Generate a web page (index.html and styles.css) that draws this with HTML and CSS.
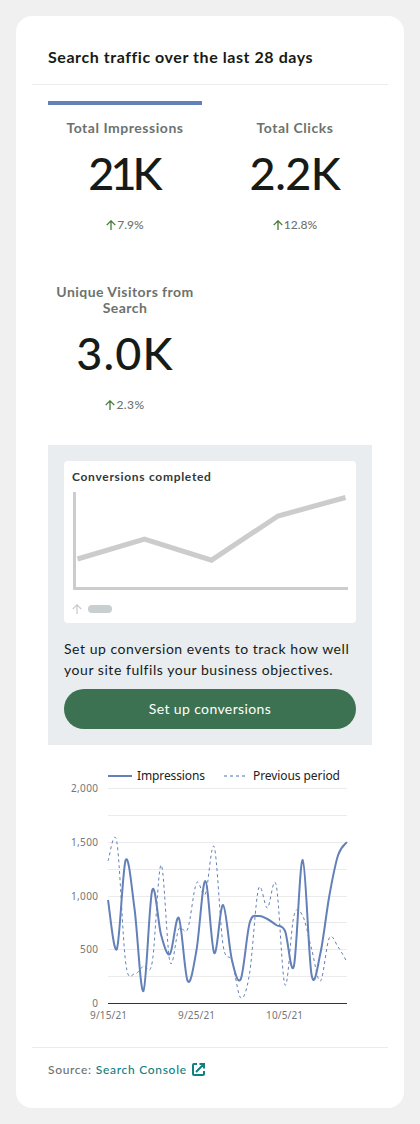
FILE: index.html
```html
<!DOCTYPE html>
<html lang="en">
<head>
<meta charset="utf-8">
<title>Search traffic</title>
<link rel="stylesheet" href="styles.css">
</head>
<body>
<main class="card">
  <header class="card-header"><h1 class="title">Search traffic over the last 28 days</h1></header>
  <section class="metrics">
    <div class="metric metric-active">
      <h2 class="metric-label">Total Impressions</h2>
      <div class="metric-value value-impressions">21K</div>
      <div class="metric-change"><svg class="arrow" viewBox="0 0 10 10"><path d="M5 10V1M.7 5.1 5 .8l4.3 4.3"/></svg><span>7.9%</span></div>
    </div>
    <div class="metric">
      <h2 class="metric-label">Total Clicks</h2>
      <div class="metric-value">2.2K</div>
      <div class="metric-change"><svg class="arrow" viewBox="0 0 10 10"><path d="M5 10V1M.7 5.1 5 .8l4.3 4.3"/></svg><span>12.8%</span></div>
    </div>
    <div class="metric">
      <h2 class="metric-label label-visitors">Unique Visitors from<br>Search</h2>
      <div class="metric-value value-visitors">3.0K</div>
      <div class="metric-change change-visitors"><svg class="arrow" viewBox="0 0 10 10"><path d="M5 10V1M.7 5.1 5 .8l4.3 4.3"/></svg><span>2.3%</span></div>
    </div>
  </section>
  <section class="promo">
    <div class="preview">
      <h3 class="preview-title">Conversions completed</h3>
      <svg class="preview-graph" viewBox="0 0 276 98">
        <path d="M2.5 0V96.5H276" stroke-width="3"/>
        <path d="M5.5 67 72.5 47.2 139.5 68.2 206 24 273.5 5.5" stroke-width="5"/>
      </svg>
      <div class="preview-change"><svg class="arrow arrow-muted" viewBox="0 0 10 10"><path d="M5 10V1M.7 5.1 5 .8l4.3 4.3"/></svg><span class="pill"></span></div>
    </div>
    <p class="promo-text">Set up conversion events to track how well<br>your site fulfils your business objectives.</p>
    <button class="button">Set up conversions</button>
  </section>
  <section class="chart">
    <svg class="chart-svg" width="324" height="270" viewBox="48 760 324 270">
      <g class="grid"><path d="M108 788.5H347M108 815.5H347M108 842.5H347M108 869.5H347M108 896.5H347M108 922.5H347M108 949.5H347M108 976.5H347"/></g>
      <path class="previous" id="previous"/>
      <path class="current" id="current"/>
      <path class="axis" d="M108 1003.5H347"/>
      <path class="current" d="M108 776H132"/>
      <path class="legend-dash" d="M224 776H245"/>
      <g class="legend">
        <text x="137" y="780" textLength="68">Impressions</text>
        <text x="253" y="780" textLength="87">Previous period</text>
      </g>
      <g class="ticks ticks-y">
        <text x="98" y="792" textLength="27">2,000</text><text x="98" y="846" textLength="27">1,500</text><text x="98" y="900" textLength="27">1,000</text><text x="98" y="953" textLength="18">500</text><text x="98" y="1007">0</text>
      </g>
      <g class="ticks ticks-x">
        <text x="108.5" y="1019" textLength="37">9/15/21</text><text x="196.5" y="1019" textLength="37">9/25/21</text><text x="284.5" y="1019" textLength="37">10/5/21</text>
      </g>
    </svg>
  </section>
  <footer class="footer">
    <span class="source">Source:</span>
    <a class="link">Search Console</a>
    <svg class="external" viewBox="0 0 13 13"><path d="M5 1H2Q1 1 1 2V11Q1 12 2 12H11Q12 12 12 11V8M7.5 1H12V5.5M4 9 11.5 1.5"/></svg>
  </footer>
</main>
<script src="chart.js"></script>
</body>
</html>
```
FILE: styles.css
```css
* { box-sizing: border-box; margin: 0; padding: 0; }
body { background: #f0f0f0; padding: 16px; font-family: Lato, "Open Sans", sans-serif; color: #161b18; }
.card { height: 1092px; background: #fff; border-radius: 16px; padding: 0 16px; overflow: hidden; }
.card-header { height: 69px; padding: 31px 16px 0; border-bottom: 1px solid #ebeef0; }
.title { font-size: 16px; line-height: 20px; font-weight: 700; white-space: nowrap; letter-spacing: .56px; }
.metrics { display: grid; grid-template-columns: 154px 154px; column-gap: 16px; grid-template-rows: 164px 180px; padding: 16px 16px 0; }
.metric { border-top: 4px solid transparent; padding-top: 15px; text-align: center; }
.metric-active { height: 148px; border-top-color: #6380b8; }
.metric-label { font-size: 14px; line-height: 16px; font-weight: 700; color: #6c726e; white-space: nowrap; letter-spacing: .54px; }
.label-visitors { letter-spacing: .44px; }
.metric-value { margin-top: 9px; font-size: 45px; line-height: 56px; font-weight: 500; letter-spacing: -.5px; }
.value-impressions { letter-spacing: -4px; padding-right: 3px; }
.value-visitors { letter-spacing: 1.1px; }
.metric-change { display: flex; align-items: center; justify-content: center; gap: 1px; margin-top: 16px; height: 16px; font-size: 12px; line-height: 16px; font-weight: 500; color: #6c726e; }
.change-visitors { letter-spacing: .4px; }
.arrow { width: 10px; height: 10px; fill: none; stroke: #467b35; stroke-width: 1.3; }
.arrow-muted { stroke: #c9ced1; }
.promo { height: 300px; margin: 0 16px; padding: 16px; background: #e9edf0; }
.preview { height: 162px; padding: 8px; background: #fff; border-radius: 4px; }
.preview-title { font-size: 12px; line-height: 16px; color: #333936; letter-spacing: .7px; white-space: nowrap; }
.preview-graph { display: block; width: 276px; height: 98px; margin-top: 7px; fill: none; stroke: #ccc; }
.preview-change { display: flex; align-items: center; gap: 6px; margin-top: 14px; height: 10px; }
.pill { width: 24px; height: 8px; border-radius: 4px; background: #c9ced1; }
.promo-text { margin-top: 15px; font-size: 14px; line-height: 21px; white-space: nowrap; letter-spacing: .54px; }
.button { display: block; width: 292px; height: 40px; margin-top: 9px; padding-bottom: 1px; border: 0; border-radius: 20px; background: #3c7251; color: #fff; font: 14px Lato, sans-serif; letter-spacing: .38px; }
.chart { height: 303px; padding: 15px 16px 0; border-bottom: 1px solid #ebebeb; }
.chart-svg { display: block; font-family: "Noto Sans", sans-serif; }
.grid path { stroke: #ebebeb; fill: none; }
.axis { stroke: #333; }
.current { fill: none; stroke: #6380b8; stroke-width: 2; }
.previous { fill: none; stroke: #6380b8; stroke-width: 1; stroke-dasharray: 3 3; }
.legend-dash { stroke: #a6b8d9; stroke-width: 2; stroke-dasharray: 3 3; }
.legend { font-size: 12px; fill: #222; }
.ticks { font-size: 10px; fill: #757575; }
.ticks-y { text-anchor: end; }
.ticks-x { text-anchor: middle; }
.footer { display: flex; align-items: center; height: 43px; padding: 0 16px; font-size: 12px; font-weight: 500; white-space: nowrap; }
.source { color: #6c726e; letter-spacing: .65px; margin-right: 4px; }
.link { color: #108080; letter-spacing: .7px; }
.external { width: 13px; height: 13px; margin-left: 5px; fill: none; stroke: #108080; stroke-width: 2; }
```
FILE: chart.js
```js
const current = [900, 949, 860, 909, 991, 890, 935, 954, 918, 981, 950, 881, 953, 905, 960, 979, 923, 916, 919, 925, 931, 966, 860, 975, 953, 896, 855, 842];
const previous = [861, 842, 963, 974, 966, 962, 865, 962, 929, 929, 883, 894, 847, 945, 961, 998, 973, 889, 908, 885, 985, 916, 916, 949, 981, 938, 947, 962];

// Smooth line through evenly spaced daily values.
function curve(values) {
  const step = 239 / (values.length - 1);
  const p = values.map((y, i) => [108 + i * step, y]);
  let d = `M${p[0]}`;
  for (let i = 0; i < p.length - 1; i++) {
    const a = p[Math.max(i - 1, 0)], b = p[i], c = p[i + 1], e = p[Math.min(i + 2, p.length - 1)];
    d += `C${b[0] + (c[0] - a[0]) / 6},${b[1] + (c[1] - a[1]) / 6} ${c[0] - (e[0] - b[0]) / 6},${c[1] - (e[1] - b[1]) / 6} ${c}`;
  }
  return d;
}
document.getElementById("current").setAttribute("d", curve(current));
document.getElementById("previous").setAttribute("d", curve(previous));
```
